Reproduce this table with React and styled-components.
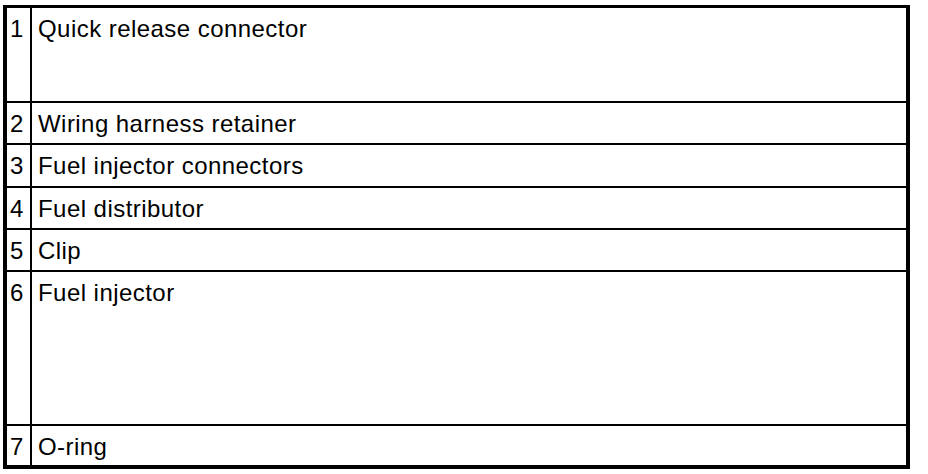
import React from "react";
import styled, { createGlobalStyle } from "styled-components";

const Global = createGlobalStyle`
  html, body {
    margin: 0;
    padding: 0;
    background: #fff;
  }
  body {
    font-family: "Liberation Sans", Arial, sans-serif;
    color: #000;
  }
`;

const Page = styled.div`
  width: 928px;
  height: 474px;
  padding: 5px 0 0 3px;
  box-sizing: border-box;
`;

const Table = styled.div`
  width: 907px;
  border: 4px solid #000;
  border-top-width: 3px;
  box-sizing: border-box;
`;

const Row = styled.div`
  display: grid;
  grid-template-columns: 25px 1fr;
  height: ${(p) => p.$h}px;
  border-top: ${(p) => (p.$first ? "none" : "2px solid #000")};
  box-sizing: border-box;
`;

const Num = styled.div`
  border-right: 2px solid #000;
  font-size: 24px;
  line-height: 26px;
  padding: 8px 0 0 3px;
`;

const Label = styled.div`
  font-size: 24px;
  line-height: 26px;
  letter-spacing: 0.45px;
  padding: 8px 0 0 6px;
`;

const items = [
  { n: 1, label: "Quick release connector", h: 93 },
  { n: 2, label: "Wiring harness retainer", h: 42 },
  { n: 3, label: "Fuel injector connectors", h: 43 },
  { n: 4, label: "Fuel distributor", h: 42 },
  { n: 5, label: "Clip", h: 42 },
  { n: 6, label: "Fuel injector", h: 154 },
  { n: 7, label: "O-ring", h: 41 },
];

export default function App() {
  return (
    <Page>
      <Global />
      <Table>
        {items.map((it, i) => (
          <Row key={it.n} $h={it.h} $first={i === 0}>
            <Num>{it.n}</Num>
            <Label>{it.label}</Label>
          </Row>
        ))}
      </Table>
    </Page>
  );
}
